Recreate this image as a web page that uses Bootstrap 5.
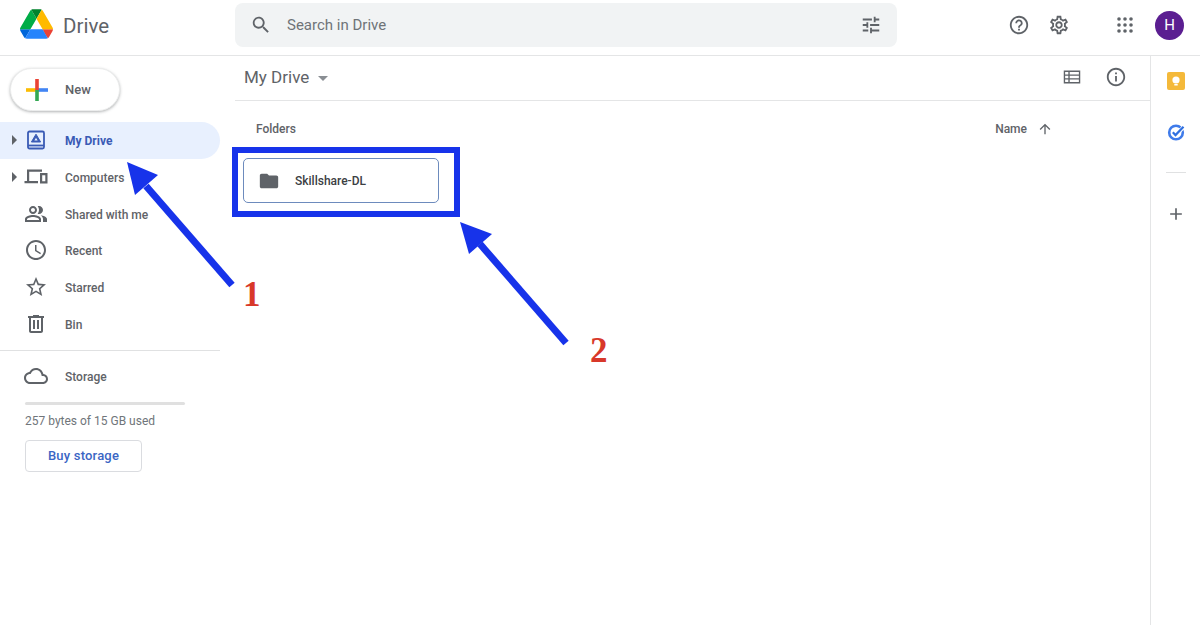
<!DOCTYPE html>
<html lang="en">
<head>
<meta charset="utf-8">
<title>Drive</title>
<link href="https://cdn.jsdelivr.net/npm/bootstrap@5.3.0/dist/css/bootstrap.min.css" rel="stylesheet">
<style>
html,body{height:625px;overflow:hidden;background:#fff}
body{font-family:Roboto,"Liberation Sans",sans-serif;color:#5f6368;position:relative;font-size:12px}
.ic{fill:#5f6368;display:block;flex:none}
.topbar{height:56px;border-bottom:1px solid #e4e5e6}
.brand{width:235px;padding-left:20px;gap:10px}
.brand svg{margin-top:-7px}
.brand-name{font-size:20.500px;color:#5f6368;line-height:1;margin-top:-3px}
.searchbox{width:662px;height:44px;margin-top:-5px;background:#f1f3f4;border-radius:8px;padding:0 15px}
.searchbox span{font-size:15px;color:#6f7378;margin-left:15px}
.top-actions{width:303px;position:relative;margin-top:-5px}
.tb-help{margin-left:111px}
.tb-gear{margin-left:18px}
.tb-apps{margin-left:47px}
.avatar{width:29px;height:29px;border-radius:50%;background:#5b1e91;color:#fff;font-size:15px;margin-left:22px}
.shell{height:569px}
.sidebar{width:220px;flex:none}
.newbtn{width:110px;height:43px;margin:12px 0 11px 10px;border-radius:22px;background:#fff;border:1px solid #eceded;box-shadow:0 1px 3px rgba(60,64,67,.4);padding:0 0 0 14px;font-size:13px;font-weight:500;color:#5f6368}
.newbtn span{margin-left:16px}
.navrow{height:36.7px;color:#5f6368;font-size:12px;font-weight:500;padding-left:24px;position:relative}
.navrow.sel{background:#e8f0fe;color:#3a5bb5;font-weight:700;border-radius:0 19px 19px 0}
.navrow b{font-weight:inherit;margin-left:17px;padding-top:2px}
.navrow .cr{position:absolute;left:12px;top:50%;margin-top:-5px;width:0;height:0;border-left:5px solid #5f6368;border-top:5px solid transparent;border-bottom:5px solid transparent}
.rule{height:1px;background:#e0e1e2;margin:8px 0 7px}
.usagebar{height:3px;width:160px;margin:7px 0 0 25px;background:#e0e0e0;border-radius:2px}
.usage{margin:9px 0 12px 25px;font-size:12px;line-height:14px;color:#70757a}
.buybtn{margin-left:25px;width:117px;height:32px;padding:0;border:1px solid #dadce0;border-radius:4px;font-size:13px;font-weight:500;letter-spacing:.2px;color:#3b66c4;background:#fff}
.maincol{min-width:0;padding-left:15px}
.toolbar{height:45px;border-bottom:1px solid #e4e5e6;padding:0 0 2px 9px}
.toolbar h1{font-size:17px;font-weight:400;color:#5f6368;margin:0;line-height:1}
.tcaret{width:0;height:0;margin-left:9px;margin-top:2px;border-left:5px solid transparent;border-right:5px solid transparent;border-top:5px solid #8a8e93}
.tb-list{margin-left:auto}
.tb-info{margin:0 23px 0 22px}
.headrow{height:55px;padding:1px 97px 0 21px;font-weight:500;font-size:12px}
.headrow .nm{margin-right:10px}
.foldercard{width:196px;height:45px;margin:2px 0 0 8px;border:1px solid #6d8bbd;border-radius:5px;padding-left:14px;font-weight:500;color:#3c4043}
.foldercard span{margin-left:15px}
.rail{width:50px;flex:none;border-left:1px solid #e4e5e6;padding-top:16px}
.rail-rule{width:20px;height:1px;background:#e0e1e2;margin:31px 0 31px}
.rail-gap{height:33px}
.overlay{position:absolute;left:0;top:0;width:1200px;height:625px;pointer-events:none}
.mark{font-family:"Liberation Serif",serif;font-weight:700;font-size:35px;fill:#d8382a}
</style>
</head>
<body>
<header class="topbar d-flex align-items-center">
  <div class="brand d-flex align-items-center">
    <svg width="33" height="30" viewBox="0 0 87.3 78"><path d="m6.600 66.850 3.850 6.650c.8 1.400 1.950 2.500 3.300 3.300l13.750-23.800h-27.500c0 1.550.4 3.100 1.200 4.500z" fill="#0066da"/><path d="m43.650 25-13.750-23.800c-1.350.8-2.500 1.900-3.300 3.300l-25.400 44a9.060 9.060 0 0 0 -1.200 4.500h27.500z" fill="#00ac47"/><path d="m73.550 76.800c1.350-.8 2.500-1.900 3.300-3.300l1.600-2.750 7.650-13.250c.8-1.400 1.200-2.950 1.200-4.500h-27.502l5.852 11.500z" fill="#ea4335"/><path d="m43.650 25 13.750-23.800c-1.350-.8-2.900-1.200-4.500-1.200h-18.500c-1.600 0-3.150.45-4.500 1.200z" fill="#00832d"/><path d="m59.800 53h-32.300l-13.750 23.800c1.350.8 2.900 1.200 4.500 1.200h50.800c1.600 0 3.150-.45 4.500-1.200z" fill="#2684fc"/><path d="m73.400 26.500-12.700-22c-.8-1.400-1.950-2.500-3.300-3.300l-13.750 23.800 16.150 28h27.450c0-1.550-.4-3.100-1.200-4.500z" fill="#ffba00"/></svg>
    <span class="brand-name">Drive</span>
  </div>
  <div class="searchbox d-flex align-items-center">
    <svg class="ic" width="22" height="22" viewBox="0 0 24 24"><path d="M15.500 14h-.79l-.28-.27C15.410 12.590 16 11.110 16 9.500 16 5.910 13.090 3 9.500 3S3 5.910 3 9.500 5.910 16 9.500 16c1.610 0 3.090-.59 4.230-1.570l.27.28v.79l5 4.990L20.490 19l-4.990-5zm-6 0C7.010 14 5 11.990 5 9.500S7.010 5 9.500 5 14 7.010 14 9.500 11.990 14 9.500 14z"/></svg>
    <span>Search in Drive</span>
    <svg class="ic ms-auto" width="22" height="22" viewBox="0 0 24 24"><path d="M3 17v2h6v-2H3zM3 5v2h10V5H3zm10 16v-2h8v-2h-8v-2h-2v6h2zM7 9v2H3v2h4v2h2V9H7zm14 4v-2H11v2h10zm-6-4h2V7h4V5h-4V3h-2v6z"/></svg>
  </div>
  <div class="top-actions d-flex align-items-center">
    <svg class="ic tb-help" width="22" height="22" viewBox="0 0 24 24"><path d="M11 18h2v-2h-2v2zm1-16C6.480 2 2 6.480 2 12s4.480 10 10 10 10-4.480 10-10S17.520 2 12 2zm0 18c-4.410 0-8-3.590-8-8s3.590-8 8-8 8 3.590 8 8-3.590 8-8 8zm0-14c-2.210 0-4 1.790-4 4h2c0-1.100.9-2 2-2s2 .9 2 2c0 2-3 1.750-3 5h2c0-2.250 3-2.500 3-5 0-2.210-1.790-4-4-4z"/></svg>
    <svg class="ic tb-gear" width="22" height="22" viewBox="0 0 24 24"><path d="M19.430 12.980c.04-.32.07-.64.07-.98 0-.34-.03-.66-.07-.98l2.110-1.650c.19-.15.24-.42.12-.64l-2-3.460c-.09-.16-.26-.25-.44-.25-.06 0-.12.01-.17.03l-2.490 1c-.52-.4-1.080-.73-1.690-.98l-.38-2.650C14.460 2.180 14.250 2 14 2h-4c-.25 0-.46.18-.49.42l-.38 2.650c-.61.25-1.170.59-1.690.98l-2.490-1c-.06-.02-.12-.03-.18-.03-.17 0-.34.09-.43.25l-2 3.460c-.13.22-.07.49.12.64l2.110 1.650c-.04.32-.07.65-.07.98 0 .33.03.66.07.98l-2.110 1.650c-.19.15-.24.42-.12.64l2 3.460c.09.16.26.25.44.25.06 0 .12-.01.17-.03l2.490-1c.52.4 1.080.73 1.690.98l.38 2.650c.03.24.24.42.49.42h4c.25 0 .46-.18.49-.42l.38-2.650c.61-.25 1.170-.59 1.690-.98l2.490 1c.06.02.12.03.18.03.17 0 .34-.09.43-.25l2-3.460c.12-.22.07-.49-.12-.64l-2.110-1.650zm-1.980-1.710c.04.31.05.52.05.73 0 .21-.02.43-.05.73l-.14 1.130.89.7 1.080.84-.7 1.210-1.270-.51-1.040-.42-.9.68c-.43.32-.84.56-1.250.73l-1.060.43-.16 1.130-.2 1.350h-1.400l-.19-1.350-.16-1.130-1.060-.43c-.43-.18-.83-.41-1.230-.71l-.91-.7-1.060.43-1.270.51-.7-1.210 1.080-.84.89-.7-.14-1.130c-.03-.31-.05-.54-.05-.74s.02-.43.05-.73l.14-1.130-.89-.7-1.080-.84.7-1.210 1.270.51 1.040.42.9-.68c.43-.32.84-.56 1.250-.73l1.060-.43.16-1.130.2-1.350h1.390l.19 1.350.16 1.130 1.060.43c.43.18.83.41 1.230.71l.91.7 1.060-.43 1.270-.51.7 1.210-1.070.85-.89.7.14 1.130zM12 8c-2.210 0-4 1.790-4 4s1.790 4 4 4 4-1.790 4-4-1.790-4-4-4zm0 6c-1.100 0-2-.9-2-2s.9-2 2-2 2 .9 2 2-.9 2-2 2z"/></svg>
    <svg class="ic tb-apps" width="16" height="16" viewBox="0 0 16 16"><circle cx="2" cy="2" r="1.800"/><circle cx="8" cy="2" r="1.800"/><circle cx="14" cy="2" r="1.800"/><circle cx="2" cy="8" r="1.800"/><circle cx="8" cy="8" r="1.800"/><circle cx="14" cy="8" r="1.800"/><circle cx="2" cy="14" r="1.800"/><circle cx="8" cy="14" r="1.800"/><circle cx="14" cy="14" r="1.800"/></svg>
    <div class="avatar d-flex align-items-center justify-content-center">H</div>
  </div>
</header>

<div class="shell d-flex">
  <aside class="sidebar">
    <button class="newbtn btn d-flex align-items-center" type="button">
      <svg width="24" height="24" viewBox="0 0 24 24"><rect x="1" y="10.200" width="11" height="3.600" fill="#fbbc04"/><rect x="12" y="10.200" width="11" height="3.600" fill="#4285f4"/><rect x="10.200" y="1" width="3.600" height="11" fill="#ea4335"/><rect x="10.200" y="12" width="3.600" height="11" fill="#34a853"/></svg>
      <span>New</span>
    </button>
    <nav class="nav flex-column">
      <a class="navrow sel d-flex align-items-center text-decoration-none" href="#"><i class="cr"></i>
        <svg width="24" height="24" viewBox="0 0 24 24" fill="none"><rect x="4" y="3.500" width="16" height="17" rx="1.500" stroke="#3a5bb5" stroke-width="1.800"/><path d="M4 17.500h16" stroke="#3a5bb5" stroke-width="1.800"/><path d="M12 6.200l4.600 7.800H7.400z" fill="#3a5bb5" stroke="#3a5bb5" stroke-linejoin="round"/><path d="M12 9.800l1.700 2.700h-3.400z" fill="#e8f0fe"/></svg>
        <b>My Drive</b></a>
      <a class="navrow d-flex align-items-center text-decoration-none" href="#"><i class="cr"></i>
        <svg class="ic" width="24" height="24" viewBox="0 0 24 24"><path d="M3 4.500h15v2.200H5.200V16H14v2.200H0.500V16H3z"/><path fill-rule="evenodd" d="M16 8h7.500v10.500H16zm2.200 2.200v6.100h3.100v-6.100z"/></svg>
        <b>Computers</b></a>
      <a class="navrow d-flex align-items-center text-decoration-none" href="#">
        <svg class="ic" width="24" height="24" viewBox="0 0 24 24"><path d="M15 8c0-1.420-.5-2.730-1.330-3.750.42-.14.86-.25 1.330-.25 2.210 0 4 1.790 4 4s-1.790 4-4 4c-.43 0-.84-.09-1.230-.21-.03-.01-.06-.02-.1-.03A5.980 5.980 0 0 0 15 8zm1.660 5.130C18.030 14.060 19 15.320 19 17v3h4v-3c0-2.180-3.570-3.470-6.340-3.870zM9 6c-1.100 0-2 .9-2 2s.9 2 2 2 2-.9 2-2-.9-2-2-2m0 9c-2.700 0-5.800 1.290-6 2.010V18h12v-1c-.2-.71-3.300-2-6-2M9 4c2.210 0 4 1.790 4 4s-1.790 4-4 4-4-1.790-4-4 1.790-4 4-4zm0 9c2.670 0 8 1.340 8 4v3H1v-3c0-2.660 5.330-4 8-4z"/></svg>
        <b>Shared with me</b></a>
      <a class="navrow d-flex align-items-center text-decoration-none" href="#">
        <svg class="ic" width="24" height="24" viewBox="0 0 24 24"><path d="M11.990 2C6.470 2 2 6.480 2 12s4.470 10 9.990 10C17.520 22 22 17.520 22 12S17.520 2 11.990 2zM12 20c-4.420 0-8-3.580-8-8s3.580-8 8-8 8 3.580 8 8-3.580 8-8 8zm.5-13H11v6l5.250 3.150.75-1.230-4.500-2.670z"/></svg>
        <b>Recent</b></a>
      <a class="navrow d-flex align-items-center text-decoration-none" href="#">
        <svg class="ic" width="24" height="24" viewBox="0 0 24 24"><path d="M22 9.240l-7.190-.62L12 2 9.190 8.630 2 9.240l5.460 4.730L5.820 21 12 17.270 18.180 21l-1.630-7.030L22 9.240zM12 15.400l-3.760 2.270 1-4.280-3.320-2.880 4.380-.38L12 6.100l1.710 4.040 4.380.38-3.320 2.880 1 4.280L12 15.400z"/></svg>
        <b>Starred</b></a>
      <a class="navrow d-flex align-items-center text-decoration-none" href="#">
        <svg class="ic" width="24" height="24" viewBox="0 0 24 24"><path d="M15 4V3H9v1H4v2h1v13c0 1.100.9 2 2 2h10c1.100 0 2-.9 2-2V6h1V4h-5zm2 15H7V6h10v13zM9 8h2v9H9zm4 0h2v9h-2z"/></svg>
        <b>Bin</b></a>
    </nav>
    <div class="rule"></div>
    <div class="navrow d-flex align-items-center">
      <svg class="ic" width="24" height="24" viewBox="0 0 24 24"><path d="M19.350 10.040C18.670 6.590 15.640 4 12 4 9.110 4 6.600 5.640 5.350 8.040 2.340 8.360 0 10.910 0 14c0 3.310 2.690 6 6 6h13c2.760 0 5-2.240 5-5 0-2.640-2.050-4.780-4.650-4.960zM19 18H6c-2.210 0-4-1.790-4-4 0-2.050 1.530-3.760 3.560-3.970l1.070-.11.5-.95C8.080 7.140 9.940 6 12 6c2.620 0 4.880 1.860 5.390 4.430l.3 1.500 1.530.11c1.560.1 2.780 1.410 2.780 2.960 0 1.650-1.350 3-3 3z"/></svg>
      <b>Storage</b>
    </div>
    <div class="usagebar"></div>
    <div class="usage">257 bytes of 15 GB used</div>
    <button class="buybtn btn" type="button">Buy storage</button>
  </aside>

  <main class="maincol flex-grow-1">
    <div class="toolbar d-flex align-items-center">
      <h1>My Drive</h1>
      <i class="tcaret"></i>
      <svg class="ic tb-list" width="22" height="22" viewBox="0 0 24 24"><path d="M3 5v14h18V5H3zm5 12.500H4.500v-2.700H8v2.700zm0-4.200H4.500v-2.600H8v2.600zm0-4H4.500V6.500H8v2.800zm11.500 8.200H9.500v-2.700h10v2.700zm0-4.200h-10v-2.600h10v2.600zm0-4h-10V6.500h10v2.800z"/></svg>
      <svg class="ic tb-info" width="22" height="22" viewBox="0 0 24 24"><path d="M11 7h2v2h-2zm0 4h2v6h-2zm1-9C6.480 2 2 6.480 2 12s4.480 10 10 10 10-4.480 10-10S17.520 2 12 2zm0 18c-4.410 0-8-3.590-8-8s3.590-8 8-8 8 3.590 8 8-3.590 8-8 8z"/></svg>
    </div>
    <div class="headrow d-flex align-items-center justify-content-between">
      <span>Folders</span>
      <span class="d-flex align-items-center"><span class="nm">Name</span>
        <svg class="ic" width="16" height="16" viewBox="0 0 24 24"><path d="M4 12l1.410 1.410L11 7.830V20h2V7.830l5.580 5.590L20 12l-8-8-8 8z"/></svg></span>
    </div>
    <div class="foldercard d-flex align-items-center">
      <svg class="ic" width="22" height="22" viewBox="0 0 24 24"><path d="M10 4H4c-1.100 0-2 .9-2 2v12c0 1.100.9 2 2 2h16c1.100 0 2-.9 2-2V8c0-1.100-.9-2-2-2h-8l-2-2z"/></svg>
      <span>Skillshare-DL</span>
    </div>
  </main>

  <aside class="rail d-flex flex-column align-items-center">
    <svg width="18" height="18" viewBox="0 0 18 18"><rect width="18" height="18" rx="2" fill="#f4b93a"/><circle cx="9" cy="8" r="3.600" fill="#fff"/><rect x="7.300" y="12" width="3.400" height="1.500" fill="#fff"/></svg>
    <div class="rail-gap"></div>
    <svg width="18" height="18" viewBox="0 0 18 18" fill="none"><circle cx="9" cy="9.500" r="6.800" stroke="#3f7bea" stroke-width="2.600"/><path d="M5.500 9.500l3 3L17 3.500" stroke="#fff" stroke-width="4"/><path d="M5.800 9.300l2.700 2.800L16.500 3.800" stroke="#2f6fe0" stroke-width="2.200"/></svg>
    <div class="rail-rule"></div>
    <svg class="ic" width="20" height="20" viewBox="0 0 24 24"><path d="M19 13h-6v6h-2v-6H5v-2h6V5h2v6h6v2z"/></svg>
  </aside>
</div>

<svg class="overlay" viewBox="0 0 1200 625">
  <rect x="235" y="150" width="222" height="64" fill="none" stroke="#1733ea" stroke-width="6"/>
  <path d="M232 285L146 186" stroke="#1733ea" stroke-width="7"/>
  <path d="M127 162L158 175 135 195z" fill="#1733ea"/>
  <path d="M566 343L480 244" stroke="#1733ea" stroke-width="7"/>
  <path d="M460 222L492 234 469 254z" fill="#1733ea"/>
  <text class="mark" x="243" y="306">1</text>
  <text class="mark" x="590" y="362">2</text>
</svg>
</body>
</html>
